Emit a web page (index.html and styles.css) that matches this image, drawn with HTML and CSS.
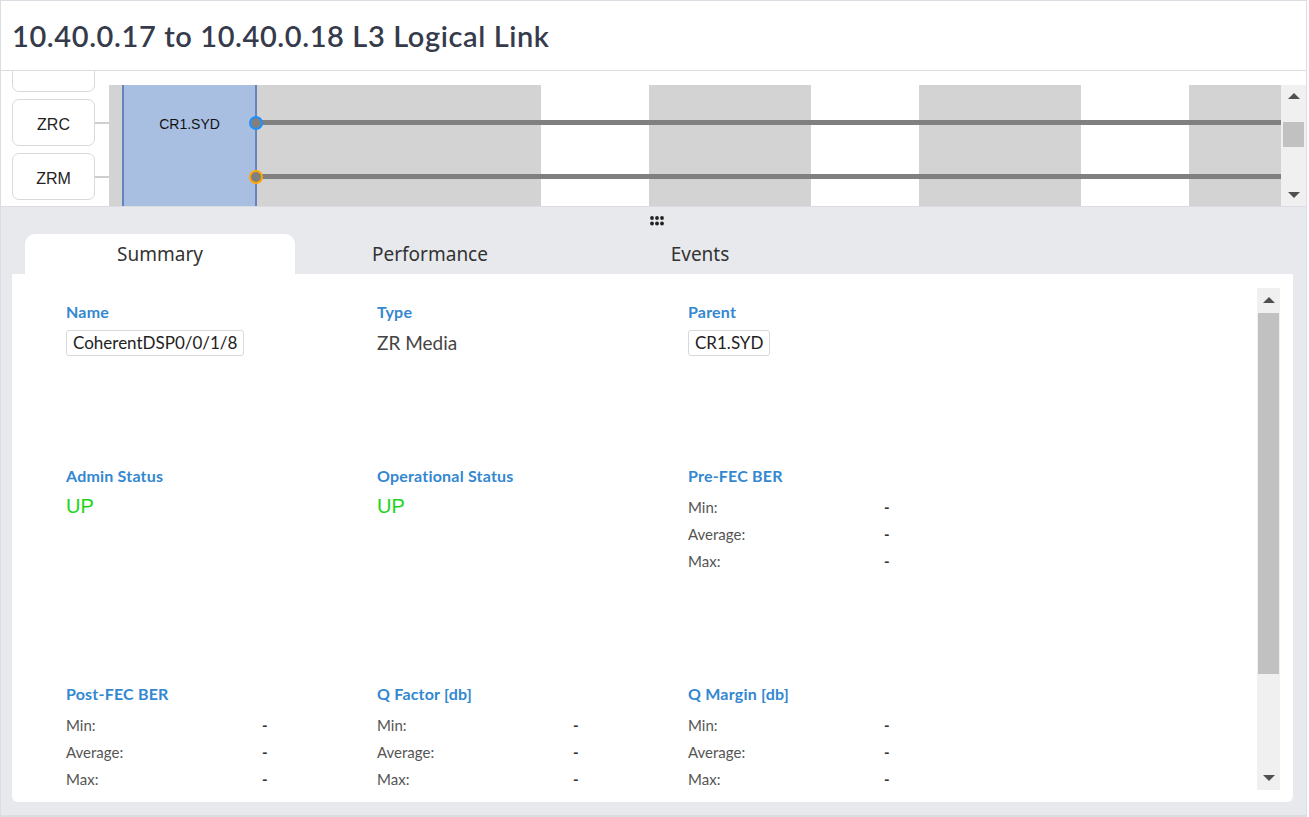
FILE: index.html
```html
<!DOCTYPE html>
<html>
<head>
<meta charset="utf-8">
<link rel="stylesheet" href="styles.css">
</head>
<body>
<div class="page">
  <header class="header"><h1 class="title">10.40.0.17 to 10.40.0.18 L3 Logical Link</h1></header>
  <section class="diagram">
    <div class="canvas">
      <div class="node node-partial"></div>
      <div class="node node-zrc">ZRC</div>
      <div class="node node-zrm">ZRM</div>
      <div class="conn conn-1"></div>
      <div class="conn conn-2"></div>
      <div class="col col-a"></div>
      <div class="col col-b"></div>
      <div class="col col-c"></div>
      <div class="col col-d"></div>
      <div class="device"><span class="device-label">CR1.SYD</span></div>
      <div class="link link-1"></div>
      <div class="link link-2"></div>
      <div class="port port-blue"></div>
      <div class="port port-orange"></div>
    </div>
    <div class="vscroll vscroll-top">
      <span class="arrow-up"></span>
      <span class="thumb thumb-top"></span>
      <span class="arrow-down"></span>
    </div>
  </section>
  <section class="lower">
    <div class="handle">
      <svg width="16" height="12" viewBox="0 0 16 12"><g fill="#222"><circle cx="3" cy="3" r="1.9"/><circle cx="8" cy="3" r="1.9"/><circle cx="13" cy="3" r="1.9"/><circle cx="3" cy="8.5" r="1.9"/><circle cx="8" cy="8.5" r="1.9"/><circle cx="13" cy="8.5" r="1.9"/></g></svg>
    </div>
    <nav class="tabs">
      <div class="tab tab-active">Summary</div>
      <div class="tab">Performance</div>
      <div class="tab">Events</div>
    </nav>
    <div class="panel">
      <div class="fields">
        <div class="row row-1">
          <div class="field">
            <div class="label">Name</div>
            <span class="chip">CoherentDSP0/0/1/8</span>
          </div>
          <div class="field">
            <div class="label">Type</div>
            <div class="plain">ZR Media</div>
          </div>
          <div class="field">
            <div class="label">Parent</div>
            <span class="chip">CR1.SYD</span>
          </div>
        </div>
        <div class="row row-2">
          <div class="field">
            <div class="label">Admin Status</div>
            <div class="up">UP</div>
          </div>
          <div class="field">
            <div class="label">Operational Status</div>
            <div class="up">UP</div>
          </div>
          <div class="field">
            <div class="label">Pre-FEC BER</div>
            <div class="stats">
              <div class="stat"><span class="k">Min:</span><span class="v">-</span></div>
              <div class="stat"><span class="k">Average:</span><span class="v">-</span></div>
              <div class="stat"><span class="k">Max:</span><span class="v">-</span></div>
            </div>
          </div>
        </div>
        <div class="row row-3">
          <div class="field">
            <div class="label">Post-FEC BER</div>
            <div class="stats">
              <div class="stat"><span class="k">Min:</span><span class="v">-</span></div>
              <div class="stat"><span class="k">Average:</span><span class="v">-</span></div>
              <div class="stat"><span class="k">Max:</span><span class="v">-</span></div>
            </div>
          </div>
          <div class="field">
            <div class="label">Q Factor [db]</div>
            <div class="stats">
              <div class="stat"><span class="k">Min:</span><span class="v">-</span></div>
              <div class="stat"><span class="k">Average:</span><span class="v">-</span></div>
              <div class="stat"><span class="k">Max:</span><span class="v">-</span></div>
            </div>
          </div>
          <div class="field">
            <div class="label">Q Margin [db]</div>
            <div class="stats">
              <div class="stat"><span class="k">Min:</span><span class="v">-</span></div>
              <div class="stat"><span class="k">Average:</span><span class="v">-</span></div>
              <div class="stat"><span class="k">Max:</span><span class="v">-</span></div>
            </div>
          </div>
        </div>
      </div>
      <div class="vscroll vscroll-panel">
        <span class="arrow-up"></span>
        <span class="thumb thumb-panel"></span>
        <span class="arrow-down"></span>
      </div>
    </div>
  </section>
</div>
</body>
</html>
```

FILE: styles.css
```css
* { box-sizing: border-box; }
html, body { margin: 0; padding: 0; background: #ffffff; }
body { font-family: "Lato", "Noto Sans", sans-serif; color: #333; }

.page {
  width: 1307px;
  height: 817px;
  border: 1px solid #dcdde3;
  border-bottom-width: 2px;
  display: flex;
  flex-direction: column;
  overflow: hidden;
}

.header {
  flex-shrink: 0;
  height: 70px;
  border-bottom: 1px solid #dcdde3;
  display: flex;
  align-items: center;
  padding-left: 11px;
}
.title {
  margin: 0;
  font-size: 29px;
  font-weight: 600;
  color: #353b4b;
  letter-spacing: 0.6px;
}

.diagram {
  flex-shrink: 0;
  height: 135px;
  display: flex;
  background: #fff;
}
.canvas {
  position: relative;
  flex: 1;
  overflow: hidden;
  font-family: "Liberation Sans", Arial, sans-serif;
}
.node {
  position: absolute;
  left: 11px;
  width: 83px;
  height: 47px;
  border: 1px solid #d9d9d9;
  border-radius: 7px;
  background: #fff;
  display: flex;
  align-items: center;
  justify-content: center;
  padding-top: 4px;
  font-size: 16px;
  color: #222;
}
.node-partial { top: -26px; }
.node-zrc { top: 28px; }
.node-zrm { top: 82px; }
.conn {
  position: absolute;
  left: 94px;
  width: 14px;
  height: 2px;
  background: #cfcfcf;
}
.conn-1 { top: 51px; }
.conn-2 { top: 105px; }
.col {
  position: absolute;
  top: 14px;
  bottom: 0;
  background: #d3d3d3;
}
.col-a { left: 108px; width: 432px; }
.col-b { left: 648px; width: 162px; }
.col-c { left: 918px; width: 162px; }
.col-d { left: 1188px; width: 100px; }
.device {
  position: absolute;
  top: 14px;
  bottom: 0;
  left: 121px;
  width: 135px;
  background: #a9bfe2;
  border-left: 2px solid #6584bd;
  border-right: 2px solid #6584bd;
  text-align: center;
  padding-top: 30px;
}
.device-label {
  font-size: 14px;
  color: #111;
}
.link {
  position: absolute;
  left: 255px;
  right: 0;
  height: 5px;
  background: #808080;
}
.link-1 { top: 49px; }
.link-2 { top: 103px; }
.port {
  position: absolute;
  left: 248px;
  width: 14px;
  height: 14px;
  border-radius: 50%;
  background: #808080;
  border: 2px solid #1e90ff;
}
.port-blue { top: 45px; }
.port-orange { top: 99px; border-color: #ffa500; }

.vscroll {
  background: #f0f0f0;
  display: flex;
  flex-direction: column;
  align-items: center;
  position: relative;
  flex-shrink: 0;
}
.vscroll-top {
  width: 25px;
  margin-top: 14px;
}
.arrow-up, .arrow-down {
  width: 0; height: 0;
  border-left: 6px solid transparent;
  border-right: 6px solid transparent;
}
.arrow-up { border-bottom: 6px solid #505050; }
.arrow-down { border-top: 6px solid #505050; }
.vscroll-top .arrow-up { margin-top: 8px; }
.vscroll-top .arrow-down { margin-top: auto; margin-bottom: 8px; }
.thumb { background: #c1c1c1; flex-shrink: 0; }
.thumb-top {
  width: 21px;
  height: 25px;
  margin-top: 23px;
}

.lower {
  flex: 1;
  min-height: 0;
  background: #e8e9ed;
  border-top: 1px solid #dcdde3;
  padding: 0 13px 13px 11px;
  display: flex;
  flex-direction: column;
}
.handle {
  flex-shrink: 0;
  height: 27px;
  display: flex;
  justify-content: center;
  align-items: center;
  padding-left: 8px;
}
.tabs {
  flex-shrink: 0;
  display: flex;
  padding-left: 13px;
}
.tab {
  width: 270px;
  height: 40px;
  display: flex;
  align-items: center;
  justify-content: center;
  font-family: "Noto Sans", sans-serif;
  font-size: 19px;
  color: #333;
  border-radius: 10px 10px 0 0;
}
.tab-active { background: #fff; }

.panel {
  flex: 1;
  min-height: 0;
  overflow: hidden;
  background: #fff;
  border-radius: 0 0 6px 6px;
  display: flex;
  padding: 14px 13px 12px 0;
}
.fields {
  flex: 1;
  padding-left: 54px;
  padding-top: 15px;
}
.row { display: flex; }
.row-1 { height: 164px; }
.row-2 { height: 218px; }
.field { width: 311px; }
.label {
  font-size: 16px;
  font-weight: 700;
  color: #3388d0;
  line-height: 18px;
  letter-spacing: 0.2px;
  margin-bottom: 9px;
}
.chip {
  display: inline-block;
  border: 1px solid #d8d9de;
  border-radius: 3px;
  padding: 0 6px;
  height: 26px;
  line-height: 24px;
  font-size: 17px;
  color: #222;
}
.plain {
  font-size: 19px;
  color: #444;
  line-height: 26px;
}
.up {
  font-family: "Liberation Sans", Arial, sans-serif;
  font-size: 20px;
  color: #19d619;
  line-height: 24px;
  margin-top: 9px;
}
.stats { margin-top: -1px; }
.stat {
  display: flex;
  height: 27px;
  align-items: center;
  font-size: 15px;
  color: #555;
}
.k { width: 196px; }
.v { color: #333; font-weight: 700; }

.vscroll-panel {
  width: 23px;
}
.vscroll-panel .arrow-up { margin-top: 9px; }
.vscroll-panel .arrow-down { margin-top: auto; margin-bottom: 9px; }
.thumb-panel {
  width: 21px;
  height: 361px;
  margin-top: 10px;
}
```
